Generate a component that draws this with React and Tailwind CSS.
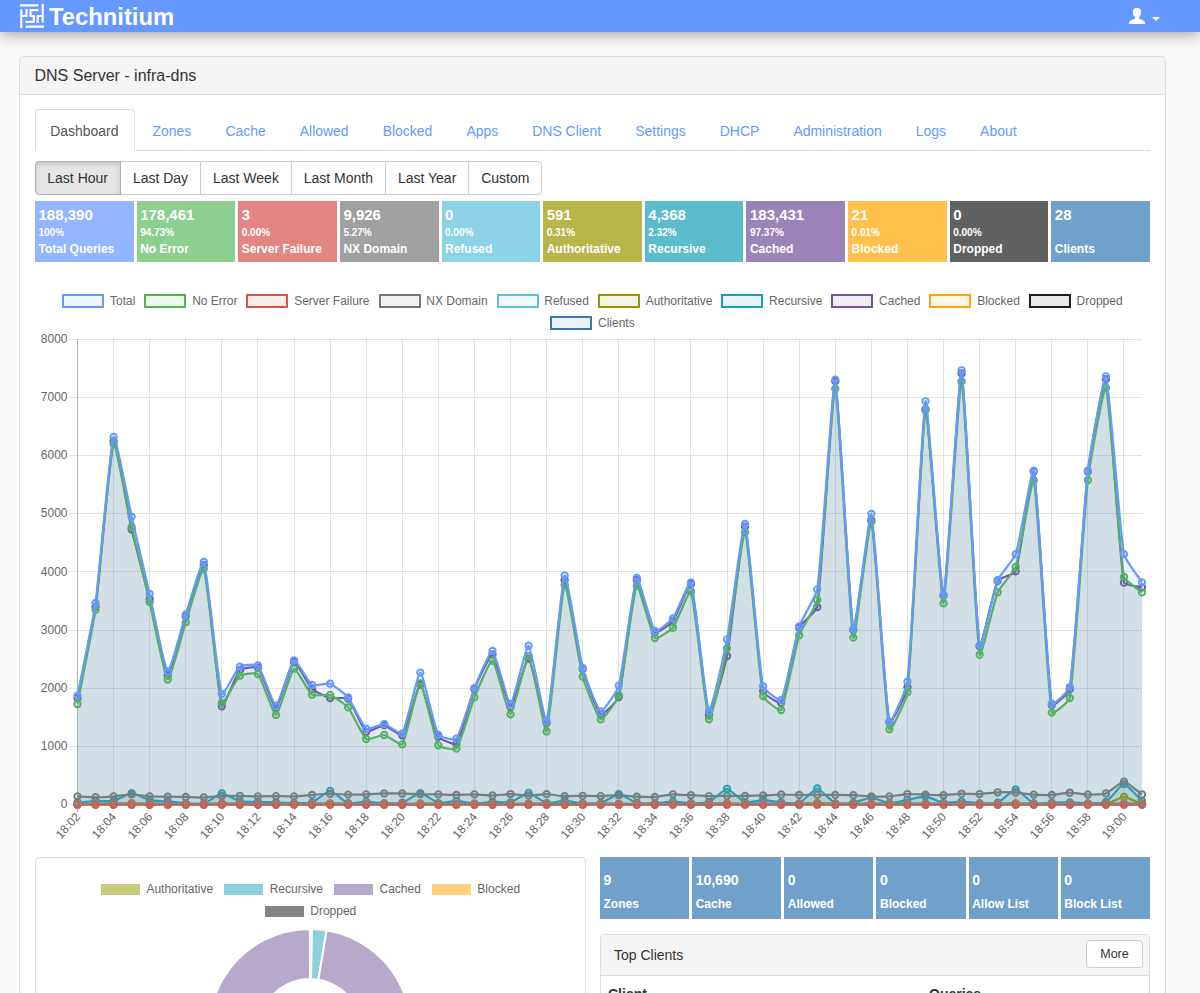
import { useState } from 'react'
import clsx from 'clsx'

const TABS = [
  'Dashboard', 'Zones', 'Cache', 'Allowed', 'Blocked', 'Apps', 'DNS Client',
  'Settings', 'DHCP', 'Administration', 'Logs', 'About',
]

const RANGES = ['Last Hour', 'Last Day', 'Last Week', 'Last Month', 'Last Year', 'Custom']

const STATS = [
  { value: '188,390', pct: '100%',   label: 'Total Queries',  bg: 'bg-[#94b5ff]' },
  { value: '178,461', pct: '94.73%', label: 'No Error',       bg: 'bg-[#8dcf8f]' },
  { value: '3',       pct: '0.00%',  label: 'Server Failure', bg: 'bg-[#e38583]' },
  { value: '9,926',   pct: '5.27%',  label: 'NX Domain',      bg: 'bg-[#a0a0a0]' },
  { value: '0',       pct: '0.00%',  label: 'Refused',        bg: 'bg-[#8cd3e8]' },
  { value: '591',     pct: '0.31%',  label: 'Authoritative',  bg: 'bg-[#b6b64b]' },
  { value: '4,368',   pct: '2.32%',  label: 'Recursive',      bg: 'bg-[#5cbccb]' },
  { value: '183,431', pct: '97.37%', label: 'Cached',         bg: 'bg-[#9b84b7]' },
  { value: '21',      pct: '0.01%',  label: 'Blocked',        bg: 'bg-[#ffc14b]' },
  { value: '0',       pct: '0.00%',  label: 'Dropped',        bg: 'bg-[#616161]' },
  { value: '28',      pct: '',       label: 'Clients',        bg: 'bg-[#71a1cb]' },
]

const LEGEND = [
  [
    { label: 'Total',          box: 'border-[#6699ff] bg-[#f0f5ff]' },
    { label: 'No Error',       box: 'border-[#52b452] bg-[#eef8ee]' },
    { label: 'Server Failure', box: 'border-[#d9534f] bg-[#fbedec]' },
    { label: 'NX Domain',      box: 'border-[#787878] bg-[#f1f1f1]' },
    { label: 'Refused',        box: 'border-[#5bc0de] bg-[#eef9fc]' },
    { label: 'Authoritative',  box: 'border-[#969600] bg-[#f4f4e5]' },
    { label: 'Recursive',      box: 'border-[#17a2b8] bg-[#e7f5f8]' },
    { label: 'Cached',         box: 'border-[#6f5499] bg-[#f0edf5]' },
    { label: 'Blocked',        box: 'border-[#ffa500] bg-[#fff6e5]' },
    { label: 'Dropped',        box: 'border-[#1e1e1e] bg-[#e8e8e8]' },
  ],
  [{ label: 'Clients', box: 'border-[#337ab7] bg-[#eaf1f8]' }],
]

const TYPE_LEGEND = [
  [
    { label: 'Authoritative', box: 'bg-[#c8ca7d]' },
    { label: 'Recursive',     box: 'bg-[#8bd0da]' },
    { label: 'Cached',        box: 'bg-[#b7a9cc]' },
    { label: 'Blocked',       box: 'bg-[#ffd17f]' },
  ],
  [{ label: 'Dropped', box: 'bg-[#848484]' }],
]

const COUNTERS = [
  { value: '9',      label: 'Zones' },
  { value: '10,690', label: 'Cache' },
  { value: '0',      label: 'Allowed' },
  { value: '0',      label: 'Blocked' },
  { value: '0',      label: 'Allow List' },
  { value: '0',      label: 'Block List' },
]

// One value per minute, 18:02 to 19:01
const TOTAL = [
  1870, 3465, 6320, 4950, 3620, 2290, 3267, 4170, 1900, 2370, 2390, 1700, 2480, 2055, 2077,
  1843, 1303, 1384, 1224, 2267, 1195, 1132, 2003, 2640, 1728, 2731, 1436, 3940, 2347, 1600,
  2043, 3895, 2984, 3200, 3820, 1608, 2840, 4824, 2035, 1795, 3064, 3700, 7306, 3018, 4996,
  1424, 2112, 6934, 3603, 7467, 2740, 3860, 4304, 5741, 1734, 2020, 5741, 7363, 4304, 3820,
]
const NO_ERROR = [
  1728, 3350, 6200, 4775, 3480, 2150, 3135, 4050, 1745, 2215, 2245, 1540, 2335, 1888, 1883,
  1670, 1126, 1195, 1035, 2084, 1018, 960, 1843, 2475, 1550, 2553, 1256, 3775, 2198, 1464,
  1875, 3763, 2863, 3040, 3667, 1464, 2685, 4680, 1866, 1625, 2910, 3517, 7151, 2870, 4864,
  1292, 1930, 6780, 3460, 7276, 2576, 3649, 4084, 5575, 1580, 1831, 5580, 7168, 3912, 3649,
]
const CACHED = [
  1830, 3400, 6250, 4730, 3530, 2220, 3240, 4120, 1690, 2310, 2355, 1660, 2450, 1985, 1830,
  1820, 1250, 1365, 1190, 2060, 1165, 1045, 1985, 2580, 1680, 2510, 1400, 3860, 2330, 1550,
  1849, 3860, 2960, 3155, 3790, 1540, 2553, 4780, 1950, 1750, 3040, 3396, 7280, 3000, 4890,
  1410, 2018, 6800, 3590, 7412, 2720, 3845, 4010, 5725, 1710, 1985, 5725, 7315, 3815, 3735,
]
const NX_DOMAIN = [
  140, 125, 140, 175, 140, 135, 130, 120, 145, 150, 140, 145, 140, 165, 185,
  170, 175, 190, 190, 178, 175, 165, 175, 155, 180, 155, 178, 143, 150, 145,
  160, 135, 130, 175, 160, 145, 150, 148, 155, 172, 165, 168, 165, 160, 140,
  140, 180, 170, 160, 187, 180, 210, 207, 170, 165, 203, 170, 190, 395, 172,
]
const RECURSIVE = [
  35, 60, 60, 195, 75, 55, 20, 15, 190, 55, 45, 35, 22, 35, 235,
  22, 50, 18, 30, 195, 28, 62, 15, 45, 38, 200, 25, 65, 18, 22,
  180, 28, 18, 48, 22, 42, 270, 38, 75, 38, 20, 275, 20, 30, 120,
  22, 80, 140, 28, 52, 20, 30, 260, 18, 32, 36, 20, 45, 350, 60,
]
const AUTHORITATIVE = TOTAL.map((_, i) => ({ 3: 22, 8: 15, 14: 20, 19: 15, 36: 22, 41: 28, 52: 18, 58: 130 })[i] ?? 4)
const ZERO = TOTAL.map(() => 0)
const CLIENTS = TOTAL.map((_, i) => 12 + ((i * 7) % 6))

// Painted from the back of the stack to the front
const SERIES = [
  { key: 'clients',       rgb: '51,122,183',  data: CLIENTS },
  { key: 'dropped',       rgb: '30,30,30',    data: ZERO },
  { key: 'blocked',       rgb: '255,165,0',   data: ZERO },
  { key: 'cached',        rgb: '111,84,153',  data: CACHED },
  { key: 'recursive',     rgb: '23,162,184',  data: RECURSIVE },
  { key: 'authoritative', rgb: '150,150,0',   data: AUTHORITATIVE },
  { key: 'refused',       rgb: '91,192,222',  data: ZERO },
  { key: 'nxDomain',      rgb: '120,120,120', data: NX_DOMAIN },
  { key: 'serverFailure', rgb: '222,82,76',   data: ZERO },
  { key: 'noError',       rgb: '82,180,82',   data: NO_ERROR },
  { key: 'total',         rgb: '102,153,255', data: TOTAL },
]

const LEFT = 77.5
const RIGHT = 1142
const TOP = 339.3
const BOTTOM = 804.5
const TENSION = 0.15

const xAt = (i) => LEFT + (i * (RIGHT - LEFT)) / 59
const yAt = (v) => BOTTOM - (v * (BOTTOM - TOP)) / 8000
const clampY = (y) => Math.min(BOTTOM, Math.max(TOP, y))

function linePath(data) {
  const pts = data.map((v, i) => [xAt(i), yAt(v)])
  const ctrl = pts.map((p, i) => {
    const prev = pts[i - 1] ?? p
    const next = pts[i + 1] ?? p
    const d1 = Math.hypot(p[0] - prev[0], p[1] - prev[1])
    const d2 = Math.hypot(next[0] - p[0], next[1] - p[1])
    const a = (TENSION * d1) / (d1 + d2)
    const b = (TENSION * d2) / (d1 + d2)
    return {
      before: [p[0] - a * (next[0] - prev[0]), clampY(p[1] - a * (next[1] - prev[1]))],
      after:  [p[0] + b * (next[0] - prev[0]), clampY(p[1] + b * (next[1] - prev[1]))],
    }
  })
  return pts
    .map((p, i) => (i === 0 ? `M${p}` : `C${ctrl[i - 1].after} ${ctrl[i].before} ${p}`))
    .join(' ')
}

function timeLabel(i) {
  const m = 18 * 60 + 2 + i
  return `${Math.floor(m / 60)}:${String(m % 60).padStart(2, '0')}`
}

function QueryChart() {
  const yTicks = [0, 1000, 2000, 3000, 4000, 5000, 6000, 7000, 8000]
  const xTicks = Array.from({ length: 30 }, (_, i) => i * 2)

  return (
    <svg viewBox="35 332 1115 513" className="block w-[1115px] h-[513px] mt-0.5 text-[12px]">
      {/* Grid */}
      <g stroke="#000" strokeOpacity="0.11">
        {yTicks.map((v) => (
          <path key={v} d={`M69 ${Math.floor(yAt(v)) + 0.5}H${RIGHT}`} />
        ))}
        {xTicks.slice(1).map((i) => (
          <path key={i} d={`M${Math.floor(xAt(i)) + 0.5} ${TOP}V812`} />
        ))}
        <path d={`M77.5 ${TOP}V812`} strokeOpacity="0.3" />
      </g>

      {/* Areas and lines */}
      {SERIES.map(({ key, rgb, data }) => {
        const line = linePath(data)
        return (
          <g key={key}>
            <path d={`${line} L${RIGHT} ${BOTTOM} L${LEFT} ${BOTTOM}Z`} fill={`rgba(${rgb},0.1)`} />
            <path d={line} fill="none" stroke={`rgb(${rgb})`} strokeWidth="2.2" strokeLinejoin="round" />
            {data.map((v, i) => (
              <circle
                key={i}
                cx={xAt(i)}
                cy={yAt(v)}
                r="3.2"
                fill={`rgba(${rgb},0.1)`}
                stroke={`rgb(${rgb})`}
                strokeWidth="1.9"
              />
            ))}
          </g>
        )
      })}

      {/* Axis labels */}
      <g fill="#666">
        {yTicks.map((v) => (
          <text key={v} x="67.5" y={yAt(v) + 3.7} textAnchor="end">{v}</text>
        ))}
        {xTicks.map((i) => (
          <text key={i} transform={`translate(${xAt(i) + 0.5} 814.5) rotate(-48)`} y="4" textAnchor="end">
            {timeLabel(i)}
          </text>
        ))}
      </g>
    </svg>
  )
}

function arc(from, to) {
  const at = (t, r) => [r * Math.sin(t * 2 * Math.PI), -r * Math.cos(t * 2 * Math.PI)]
  const large = to - from > 0.5 ? 1 : 0
  return `M${at(from, 101)} A101 101 0 ${large} 1 ${at(to, 101)} L${at(to, 51)} A51 51 0 ${large} 0 ${at(from, 51)}Z`
}

function TypeChart() {
  return (
    <svg viewBox="-103 -103 206 206" className="block ml-[171px] w-[206px] h-[206px]">
      <g stroke="#fff" strokeWidth="2">
        <path d={arc(0, 0.0031)} fill="#c8ca7d" />
        <path d={arc(0.0031, 0.0263)} fill="#8bd0da" />
        <path d={arc(0.0263, 0.9998)} fill="#b7a9cc" />
      </g>
    </svg>
  )
}

function Logo() {
  return (
    <svg viewBox="0 0 24 24" className="w-6 h-6 ml-0.5" fill="none" stroke="#fff" strokeWidth="2.2">
      {/* Outer bars */}
      <path d="M0 1.300H18.500M22.700 0V18.500M24 22.700H5.500M1.300 24V5.500" />
      {/* Inner maze */}
      <path d="M18.500 6.200H10.500V12H13.800V17.800H5.500M1.300 12H6.500V5.100M22.700 12H17.700V18.900" />
    </svg>
  )
}

export default function App() {
  const [tab, setTab] = useState('Dashboard')
  const [range, setRange] = useState('Last Hour')

  return (
    <div className="h-screen overflow-hidden bg-[#fafafa] text-[#333] [font-family:'Liberation_Sans',Arial,sans-serif]">

      {/* Top bar */}
      <header className="h-8 bg-[#6699ff] shadow-[0_2px_16px_rgba(0,0,0,0.38)] flex items-center justify-between pl-[18px] pr-10">
        <div className="flex items-center gap-[5px] text-white">
          <Logo />
          <span className="text-[23.8px] leading-8 font-bold pt-0.5">Technitium</span>
        </div>
        <button type="button" aria-label="Account" className="flex items-center">
          <svg viewBox="0 0 16 16" className="w-4 h-4" fill="#fff">
            <path d="M8 0C5.200 0 3.800 1.500 3.800 3.900c0 2.200.7 4.100 2.100 5.200v1.400C5.700 11.500 0 12.200 0 14.700V16h16v-1.300c0-2.500-5.700-3.200-5.900-4.200V9.100C11.500 8 12.200 6.100 12.200 3.900 12.200 1.500 10.800 0 8 0Z" />
          </svg>
          <svg viewBox="0 0 8 4" className="w-2 h-1 ml-[7px] mt-[5px]" fill="#fff">
            <path d="M0 0h8L4 4Z" />
          </svg>
        </button>
      </header>

      <main className="ml-[19px] mt-[23.5px] w-[1147px] h-[1100px] bg-white border border-[#ddd] rounded">
        <h1 className="h-[38.5px] px-[14.5px] leading-[37.5px] text-base bg-[#f5f5f5] border-b border-[#ddd] rounded-t">
          DNS Server - infra-dns
        </h1>

        <div className="px-[15px] pt-3.5">
          {/* Tabs */}
          <nav className="flex gap-0.5 h-[42px] border-b border-[#ddd] text-[13.95px]">
            {TABS.map((name) => (
              <button
                key={name}
                type="button"
                onClick={() => setTab(name)}
                className={clsx(
                  'h-[42px] pt-0.5 px-[15.05px] first:pl-[14.3px] border rounded-t',
                  tab === name
                    ? 'bg-white border-[#ddd] border-b-white text-[#555]'
                    : 'border-transparent text-[#6699ff]',
                )}
              >
                {name}
              </button>
            ))}
          </nav>

          {/* Time range */}
          <div className="flex mt-2.5 text-sm">
            {RANGES.map((name) => (
              <button
                key={name}
                type="button"
                onClick={() => setRange(name)}
                className={clsx(
                  'h-[34px] px-[11.95px] border -ml-px first:ml-0 first:pl-[11.3px] first:rounded-l last:rounded-r',
                  range === name
                    ? 'relative bg-[#e6e6e6] border-[#adadad] shadow-[inset_0_3px_5px_rgba(0,0,0,0.125)]'
                    : 'bg-white border-[#ccc]',
                )}
              >
                {name}
              </button>
            ))}
          </div>

          {/* Stat tiles */}
          <div className="grid grid-cols-11 gap-[3px] mt-1.5 text-white font-bold">
            {STATS.map(({ value, pct, label, bg }) => (
              <div key={label} className={clsx('h-[61px] pl-[3.5px] pt-1', bg)}>
                <div className="text-[15px] leading-5">{value}</div>
                <div className="h-4 text-[10px] leading-4">{pct}</div>
                <div className="text-xs leading-4 whitespace-nowrap">{label}</div>
              </div>
            ))}
          </div>

          {/* Chart legend */}
          <div className="flex flex-col items-center gap-2 mt-8 text-xs leading-[14px] text-[#666]">
            {LEGEND.map((row, i) => (
              <div key={i} className="flex gap-[9px]">
                {row.map(({ label, box }) => (
                  <div key={label} className="flex items-center gap-[5.7px]">
                    <span className={clsx('w-[42px] h-3.5 border-2', box)} />
                    {label}
                  </div>
                ))}
              </div>
            ))}
          </div>

          <QueryChart />

          <div className="flex gap-3.5 mt-3">
            {/* Query types */}
            <section className="w-[551px] h-[300px] border border-[#ddd] rounded pt-6">
              <div className="flex flex-col items-center gap-2 text-xs leading-[14px] text-[#666]">
                {TYPE_LEGEND.map((row, i) => (
                  <div key={i} className="flex gap-[11px]">
                    {row.map(({ label, box }) => (
                      <div key={label} className="flex items-center gap-[6.5px]">
                        <span className={clsx('w-[39px] h-[11px]', box)} />
                        {label}
                      </div>
                    ))}
                  </div>
                ))}
              </div>
              <div className="pt-[9px]">
                <TypeChart />
              </div>
            </section>

            <div className="flex-1">
              <div className="grid grid-cols-6 gap-[3px] text-white font-bold">
                {COUNTERS.map(({ value, label }) => (
                  <div key={label} className="h-[62px] pl-[3.5px] pt-[13px] bg-[#71a1cb]">
                    <div className="text-sm leading-5">{value}</div>
                    <div className="mt-1.5 text-xs leading-4">{label}</div>
                  </div>
                ))}
              </div>

              {/* Top clients */}
              <section className="mt-[15px] h-[300px] border border-[#ddd] rounded">
                <div className="flex items-center justify-between h-[41px] pl-[13px] pr-1.5 bg-[#f5f5f5] border-b border-[#ddd] rounded-t">
                  <h2 className="text-sm">Top Clients</h2>
                  <button type="button" className="w-[57px] h-7 -mt-0.5 text-[12.5px] bg-white border border-[#ccc] rounded">
                    More
                  </button>
                </div>
                <table className="w-full text-sm text-left">
                  <thead>
                    <tr>
                      <th className="w-[321px] pl-[7px] pt-2">Client</th>
                      <th className="pl-[7px] pt-2">Queries</th>
                    </tr>
                  </thead>
                </table>
              </section>
            </div>
          </div>
        </div>
      </main>
    </div>
  )
}
